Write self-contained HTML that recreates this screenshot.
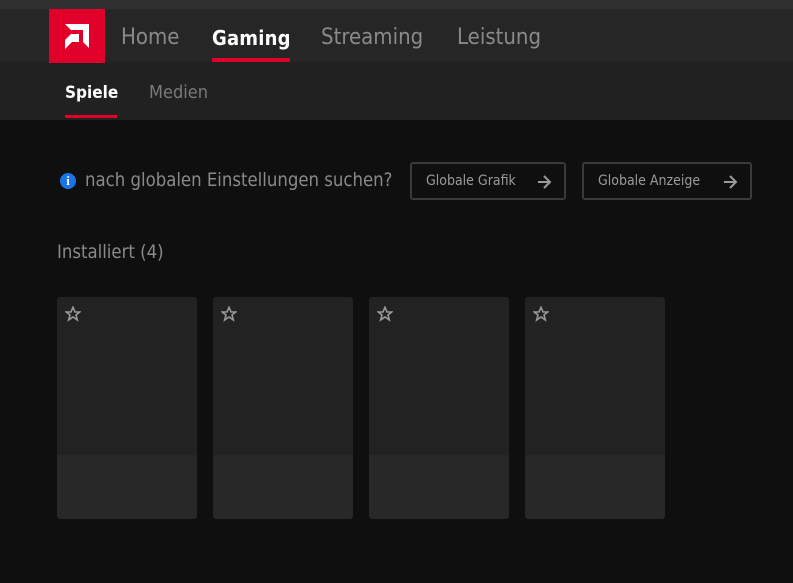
<!DOCTYPE html><html><head><style>
body{margin:0;width:793px;height:583px;background:#0f0f0f;font-family:"DejaVu Sans Condensed","Liberation Sans",sans-serif;overflow:hidden;position:relative}
.a{position:absolute}
.top{left:0;top:0;width:793px;height:9px;background:#303030}
.hdr{left:0;top:9px;width:793px;height:53px;background:#262626}
.sub{left:0;top:62px;width:793px;height:58px;background:#212121}
.logo{left:49px;top:9px;width:56px;height:54px;background:#e0002a}
.nav{font-size:22px;color:#8a8a8a;top:25px}
.sn{font-size:17px;color:#7a7a7a;top:83px}
.btn{border:2px solid #3a3a3a;border-radius:3px;height:38px;box-sizing:border-box;top:162px;color:#9a9a9a;font-size:14px;line-height:35px;padding-left:14px}
.btn svg{position:absolute;right:12px;top:10px}
.card{top:297px;width:140px;height:222px;border-radius:3px;background:#222;overflow:hidden}
.card:after{content:"";position:absolute;left:0;top:158px;width:140px;height:64px;background:#282828}
.card svg{position:absolute;left:8px;top:9px}
</style></head><body>
<div class="a top"></div><div class="a hdr"></div><div class="a sub"></div>
<div class="a logo"><svg width="56" height="54" viewBox="0 0 56 54"><path d="M16 15H40V39L34 33V21H22Z" fill="#fff"/><path d="M16 31L22 25H30V33H23L16 40Z" fill="#fff"/></svg></div>
<div class="a nav" style="left:121px">Home</div>
<div class="a nav" style="left:212px;color:#fff;font-weight:bold;font-size:20px;top:26px;letter-spacing:0.2px">Gaming</div>
<div class="a" style="left:212px;top:58px;width:78px;height:4px;background:#e0002a"></div>
<div class="a nav" style="left:321px">Streaming</div>
<div class="a nav" style="left:457px">Leistung</div>
<div class="a sn" style="left:65px;color:#fff;font-weight:bold">Spiele</div>
<div class="a" style="left:65px;top:115px;width:52px;height:3px;background:#e0002a"></div>
<div class="a sn" style="left:149px;font-size:18px;top:82px">Medien</div>
<div class="a" style="left:60px;top:173px;width:16px;height:16px;border-radius:50%;background:#1a73e8;color:#fff;font-size:13px;font-weight:bold;text-align:center;line-height:16px;font-family:'Liberation Serif',serif">i</div>
<div class="a" style="left:85px;top:170px;font-size:18.4px;color:#8a8a8a">nach globalen Einstellungen suchen?</div>
<div class="a btn" style="left:410px;width:156px">Globale Grafik<svg width="16" height="16" viewBox="0 0 16 16"><path d="M2 8H14M8 2L14 8L8 14" fill="none" stroke="#9a9a9a" stroke-width="2"/></svg></div>
<div class="a btn" style="left:582px;width:170px">Globale Anzeige<svg width="16" height="16" viewBox="0 0 16 16"><path d="M2 8H14M8 2L14 8L8 14" fill="none" stroke="#9a9a9a" stroke-width="2"/></svg></div>
<div class="a" style="left:57px;top:242px;font-size:18.4px;color:#8a8a8a">Installiert (4)</div>
<div class="a card" style="left:57px"><svg width="16" height="16" viewBox="0 0 24 24"><path d="M12 2l3 7h7l-5.5 4.5 2 7.5-6.5-4.5-6.5 4.5 2-7.5L2 9h7z" fill="none" stroke="#999" stroke-width="2.4"/></svg></div>
<div class="a card" style="left:213px"><svg width="16" height="16" viewBox="0 0 24 24"><path d="M12 2l3 7h7l-5.5 4.5 2 7.5-6.5-4.5-6.5 4.5 2-7.5L2 9h7z" fill="none" stroke="#999" stroke-width="2.4"/></svg></div>
<div class="a card" style="left:369px"><svg width="16" height="16" viewBox="0 0 24 24"><path d="M12 2l3 7h7l-5.5 4.5 2 7.5-6.5-4.5-6.5 4.5 2-7.5L2 9h7z" fill="none" stroke="#999" stroke-width="2.4"/></svg></div>
<div class="a card" style="left:525px"><svg width="16" height="16" viewBox="0 0 24 24"><path d="M12 2l3 7h7l-5.5 4.5 2 7.5-6.5-4.5-6.5 4.5 2-7.5L2 9h7z" fill="none" stroke="#999" stroke-width="2.4"/></svg></div>
</body></html>
